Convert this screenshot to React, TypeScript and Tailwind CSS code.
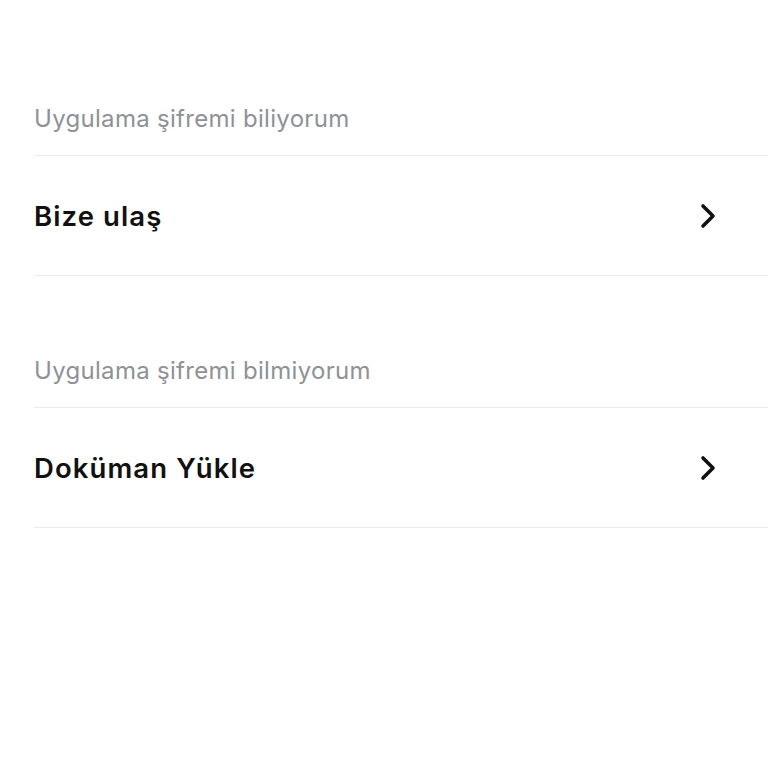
import React from "react";

function Chevron() {
  return (
    <svg width="16" height="26" viewBox="0 0 16 26" fill="none" className="shrink-0">
      <path d="M3 3 L13 13 L3 23" stroke="#111" strokeWidth="3.6" strokeLinecap="round" strokeLinejoin="round" />
    </svg>
  );
}

function Label({ children }: { children: React.ReactNode }) {
  return (
    <div className="h-[60px] flex items-start pt-[7px] border-b border-[#ececec]">
      <span className="text-[24px] leading-[32px] tracking-[0.3px] text-[#8e9297]">{children}</span>
    </div>
  );
}

function Row({ children }: { children: React.ReactNode }) {
  return (
    <div className="h-[120px] flex items-center justify-between pr-[52px] border-b border-[#ececec]">
      <span className="text-[27.5px] leading-[36px] font-semibold tracking-[1.1px] text-[#111]">{children}</span>
      <Chevron />
    </div>
  );
}

export default function App() {
  return (
    <div className="w-[768px] h-[768px] bg-white pl-[34px] pt-[96px]" style={{ fontFamily: 'Inter, "Noto Sans", sans-serif' }}>
      <Label>Uygulama şifremi biliyorum</Label>
      <Row>Bize ulaş</Row>
      <div className="h-[72px]" />
      <Label>Uygulama şifremi bilmiyorum</Label>
      <Row>Doküman Yükle</Row>
    </div>
  );
}
